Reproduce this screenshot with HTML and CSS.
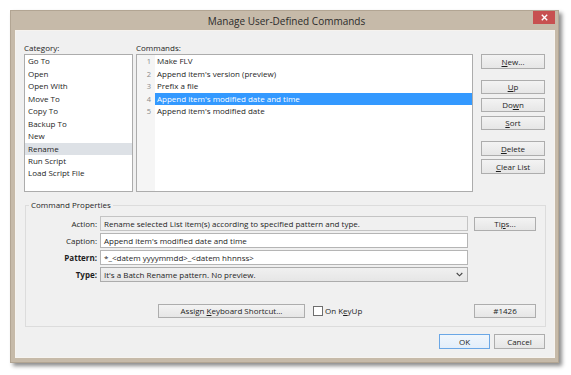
FILE: index.html
```html
<!DOCTYPE html>
<html>
<head>
<meta charset="utf-8">
<title>Manage User-Defined Commands</title>
<link rel="stylesheet" href="styles.css">
</head>
<body>
<div class="window">
  <div class="titlebar">
    <span class="title">Manage User-Defined Commands</span>
    <span class="close"><svg width="7" height="7" viewBox="0 0 7 7"><path d="M0.8 0.8 L6.2 6.2 M6.2 0.8 L0.8 6.2" stroke="#fff" stroke-width="1.4" fill="none"/></svg></span>
  </div>
  <div class="client">
    <div class="top">
      <div class="cat">
        <div class="lbl">Category:</div>
        <ul class="list">
          <li class="row">Go To</li>
          <li class="row">Open</li>
          <li class="row">Open With</li>
          <li class="row">Move To</li>
          <li class="row">Copy To</li>
          <li class="row">Backup To</li>
          <li class="row">New</li>
          <li class="row current">Rename</li>
          <li class="row">Run Script</li>
          <li class="row">Load Script File</li>
        </ul>
      </div>
      <div class="cmds">
        <div class="lbl">Commands:</div>
        <ul class="list cmdlist">
          <li class="crow"><span class="num">1</span><span class="ctext">Make FLV</span></li>
          <li class="crow"><span class="num">2</span><span class="ctext">Append item's version (preview)</span></li>
          <li class="crow"><span class="num">3</span><span class="ctext">Prefix a file</span></li>
          <li class="crow sel"><span class="num">4</span><span class="ctext">Append item's modified date and time</span></li>
          <li class="crow"><span class="num">5</span><span class="ctext">Append item's modified date</span></li>
        </ul>
      </div>
      <div class="btns">
        <button class="btn"><u>N</u>ew...</button>
        <button class="btn gap"><u>U</u>p</button>
        <button class="btn near">Do<u>w</u>n</button>
        <button class="btn near"><u>S</u>ort</button>
        <button class="btn gap"><u>D</u>elete</button>
        <button class="btn near"><u>C</u>lear List</button>
      </div>
    </div>
    <fieldset class="group">
      <legend>Command Properties</legend>
      <div class="props">
        <label class="plabel">Action:</label>
        <div class="field readonly">Rename selected List item(s) according to specified pattern and type.</div>
        <button class="btn tips">Ti<u>p</u>s...</button>

        <label class="plabel">Caption:</label>
        <div class="field">Append item's modified date and time</div>
        <span></span>

        <label class="plabel bold">Pattern:</label>
        <div class="field">*_&lt;datem yyyymmdd&gt;_&lt;datem hhnnss&gt;</div>
        <span></span>

        <label class="plabel bold">Type:</label>
        <div class="field combo"><span>It's a Batch Rename pattern. No preview.</span><svg width="7" height="5" viewBox="0 0 7 5"><path d="M0.7 1 L3.5 3.8 L6.3 1" stroke="#444" stroke-width="1.1" fill="none"/></svg></div>
        <span></span>

        <span></span>
        <div class="assign">
          <button class="btn abtn">Assign <u>K</u>eyboard Shortcut...</button>
          <span class="check"></span>
          <span class="checklbl">On K<u>e</u>yUp</span>
        </div>
        <button class="btn idbtn">#1426</button>
      </div>
    </fieldset>
    <div class="footer">
      <button class="btn fbtn ok">OK</button>
      <button class="btn fbtn">Cancel</button>
    </div>
  </div>
</div>
</body>
</html>
```
FILE: styles.css
```css
html, body {
  margin: 0;
  background: #ffffff;
}
body {
  padding: 10px;
  font-family: "Open Sans", "Noto Sans", sans-serif;
  font-size: 8px;
  color: #1e1e1e;
}
.window {
  width: 549px;
  height: 353px;
  box-sizing: border-box;
  background: #c6baa9;
  border: 1px solid #b2a593;
  box-shadow: 3px 3px 4px rgba(0, 0, 0, 0.45);
  padding: 0 4px 5px 5px;
  display: flex;
  flex-direction: column;
}
.titlebar {
  height: 21px;
  margin: 0 -4px 0 -5px;
  display: flex;
  align-items: center;
  justify-content: center;
  position: relative;
}
.title {
  font-size: 10px;
  color: #2b2b2b;
  padding-left: 4px;
}
.close {
  position: absolute;
  right: 3px;
  top: 0;
  width: 22px;
  height: 13px;
  background: #c75050;
  display: flex;
  align-items: center;
  justify-content: center;
}
.client {
  flex: 1;
  background: #f0f0f0;
  box-shadow: 0 0 0 1px #f6f3ef;
  padding: 10px 9px 8px 8px;
  display: flex;
  flex-direction: column;
}
.top {
  display: flex;
  height: 151px;
}
.cat {
  width: 109px;
}
.cmds {
  width: 337px;
  margin-left: 3px;
}
.btns {
  width: 64px;
  margin-left: 8px;
  padding-top: 13px;
  display: flex;
  flex-direction: column;
}
.lbl {
  height: 13px;
  line-height: 13px;
}
.list {
  list-style: none;
  margin: 0;
  padding: 0;
  height: 138px;
  box-sizing: border-box;
  border: 1px solid #acacac;
  background: #ffffff;
}
.row {
  height: 12.45px;
  line-height: 12.45px;
  padding-left: 3px;
}
.row.current {
  background: #dde1e6;
}
.cmdlist {
  background: linear-gradient(to right, #f5f5f5 0, #f5f5f5 18px, #ffffff 18px);
}
.crow {
  height: 12.45px;
  line-height: 12.45px;
  display: flex;
}
.num {
  width: 14px;
  padding-right: 4px;
  text-align: right;
  color: #8a8a8a;
  font-size: 7.5px;
}
.ctext {
  flex: 1;
  padding-left: 2px;
}
.crow.sel .ctext {
  background: #3399ff;
  color: #ffffff;
}
.btn {
  font-family: inherit;
  font-size: 8px;
  color: #1e1e1e;
  height: 14.5px;
  box-sizing: border-box;
  border: 1px solid #adadad;
  background: linear-gradient(#f3f3f3, #e6e6e6);
  padding: 0;
  margin: 0;
  line-height: 12px;
  text-align: center;
}
.btn u {
  text-decoration-thickness: 1px;
  text-underline-offset: 1px;
}
.btns .gap {
  margin-top: 11px;
}
.btns .near {
  margin-top: 3.5px;
}
.group {
  margin: 7px -1px 0 1px;
  border: 1px solid #dcdcdc;
  padding: 0 9px 8px 0;
  min-width: 0;
}
.group legend {
  margin-left: 3px;
  padding: 0 2px;
  line-height: 12px;
  height: 12px;
  color: #1e1e1e;
}
.props {
  padding-top: 5px;
  display: grid;
  grid-template-columns: 74px 374px 62px;
  grid-template-rows: 15px 15px 15px 15px auto;
  row-gap: 1.7px;
}
.plabel {
  text-align: right;
  padding-right: 3px;
  line-height: 15px;
}
.plabel.bold {
  font-weight: bold;
}
.field {
  width: 368px;
  height: 15px;
  box-sizing: border-box;
  border: 1px solid #b5b5b5;
  background: #ffffff;
  padding-left: 3px;
  line-height: 13px;
  white-space: nowrap;
  overflow: hidden;
}
.field.readonly {
  background: #f0f0f0;
  border-color: #c4c4c4;
}
.field.combo {
  background: linear-gradient(#f0f0f0, #e6e6e6);
  border-color: #acacac;
  display: flex;
  align-items: center;
  justify-content: space-between;
  padding-right: 4px;
}
.tips {
  height: 14px;
  width: 62px;
  align-self: center;
}
.assign {
  grid-row: 5;
  grid-column: 2;
  margin-top: 20.3px;
  height: 14.5px;
  display: flex;
  align-items: center;
  padding-left: 58px;
}
.abtn {
  width: 147px;
}
.check {
  width: 10px;
  height: 10px;
  box-sizing: border-box;
  border: 1px solid #6e6e6e;
  background: #ffffff;
  margin-left: 8px;
}
.checklbl {
  margin-left: 2px;
}
.idbtn {
  grid-row: 5;
  grid-column: 3;
  margin-top: 20.3px;
  width: 62px;
}
.footer {
  display: flex;
  justify-content: flex-end;
  gap: 4px;
  margin-top: 7px;
}
.fbtn {
  width: 51px;
  height: 15px;
}
.fbtn.ok {
  border-color: #6aa7e6;
  background: linear-gradient(#f0f6fc, #e3eefa);
}
```
